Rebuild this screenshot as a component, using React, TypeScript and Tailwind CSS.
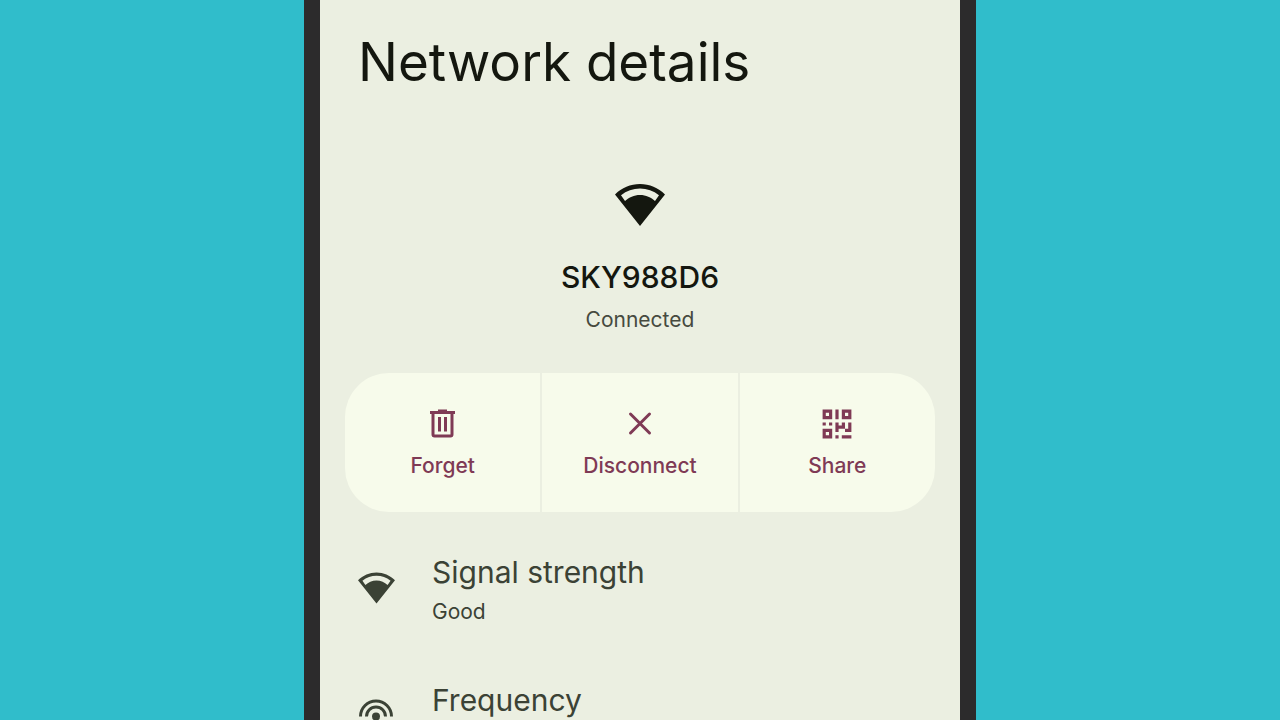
import type { ReactNode } from 'react'

function WifiIcon({ className }: { className: string }) {
  return (
    <svg className={className} viewBox="0 0 50 42" fill="currentColor" aria-hidden="true">
      <path
        fillRule="evenodd"
        d="M25 0C15.500 0 6.800 3.800 0 10.500L25 42 50 10.500C43.200 3.800 34.500 0 25 0ZM25 4.500C32 4.500 38.500 6.800 44 11.300L40 17C36 13.500 31 11 25 11S14 13.500 10 17L6 11.300C11.500 6.800 18 4.500 25 4.500Z"
      />
    </svg>
  )
}

function TrashIcon() {
  return (
    <svg className="h-8 w-8" viewBox="0 0 32 32" fill="none" stroke="currentColor" strokeWidth="3" aria-hidden="true">
      <path d="M3 4.500h25" />
      <path d="M11 3h9" />
      <path d="M6 5v21.500q0 1.500 1.500 1.500h16q1.500 0 1.500-1.500V5" />
      <path d="M12.500 9v14.500M18.500 9v14.500" />
    </svg>
  )
}

function CloseIcon() {
  return (
    <svg className="h-8 w-8" viewBox="0 0 32 32" fill="none" stroke="currentColor" strokeWidth="3" strokeLinecap="round" aria-hidden="true">
      <path d="M6.500 6l19 19M25.500 6l-19 19" />
    </svg>
  )
}

function QrIcon() {
  return (
    <svg className="h-8 w-8" viewBox="-0.500 -0.500 10 10" fill="currentColor" aria-hidden="true">
      <path fillRule="evenodd" d="M0 0h3v3h-3zM1 1v1h1v-1zM6 0h3v3h-3zM7 1v1h1v-1zM0 6h3v3h-3zM1 7v1h1v-1z" />
      <path d="M4 0h1v3h-1zM0 4h1v1h-1zM2 4h1v1h-1z" />
      <path d="M4 4h1v1h1v-1h1v2h-2v1h-1zM8 4h1v3h-2v-1h1zM4 8h1v1h-1zM6 8h3v1h-3z" />
    </svg>
  )
}

function FrequencyIcon() {
  return (
    <svg className="h-9 w-9" viewBox="0 0 36 36" fill="none" stroke="currentColor" strokeWidth="3" aria-hidden="true">
      <path d="M2.500 18.500a15.500 15.500 0 0 1 31 0M8.500 18.500a9.500 9.500 0 0 1 19 0" />
      <circle cx="18" cy="18.500" r="4" fill="currentColor" stroke="none" />
      <path d="M18 20v13" />
    </svg>
  )
}

const actions: { label: string; icon: ReactNode }[] = [
  { label: 'Forget', icon: <TrashIcon /> },
  { label: 'Disconnect', icon: <CloseIcon /> },
  { label: 'Share', icon: <QrIcon /> },
]

export default function App() {
  return (
    <div className="h-screen overflow-hidden bg-[#30bdcb] font-['Inter','Roboto',sans-serif]">
      <main className="mx-auto min-h-full w-full max-w-2xl border-x-16 border-[#2c2b2c] bg-[#ebefe1] text-[#14170f]">
        <h1 className="px-[38px] pt-7 text-[53px] leading-[68px]">Network details</h1>

        {/* Current network */}
        <section className="flex flex-col items-center pt-[88px]">
          <WifiIcon className="h-[42px] w-[50px]" />
          <h2 className="mt-[31px] text-[30px] leading-10 font-medium">SKY988D6</h2>
          <p className="mt-[9px] text-[21px] leading-7 text-[#464a3f]">Connected</p>
        </section>

        {/* Actions */}
        <div className="mx-[25px] mt-[39px] grid grid-cols-3 gap-0.5 overflow-hidden rounded-[44px]">
          {actions.map(action => (
            <button
              key={action.label}
              type="button"
              className="flex h-[139px] flex-col items-center bg-[#f7fbeb] pt-[35px] text-[#7f3a55]"
            >
              {action.icon}
              <span className="mt-3 text-[21px] leading-7 font-medium">{action.label}</span>
            </button>
          ))}
        </div>

        {/* Details */}
        <ul className="px-[38px] pt-10 text-[#3b4235]">
          <li className="flex h-32 items-start gap-[37px]">
            <WifiIcon className="mt-5 h-8 w-[37px]" />
            <div>
              <h3 className="text-[30px] leading-[41px]">Signal strength</h3>
              <p className="text-[21px] leading-[38px]">Good</p>
            </div>
          </li>
          <li className="flex items-start gap-[38px]">
            <span className="mt-[18px]">
              <FrequencyIcon />
            </span>
            <h3 className="text-[30px] leading-[41px]">Frequency</h3>
          </li>
        </ul>
      </main>
    </div>
  )
}
